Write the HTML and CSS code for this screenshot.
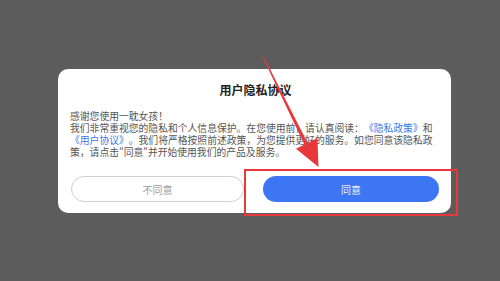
FILE: index.html
```html
<!DOCTYPE html>
<html lang="zh-CN">
<head>
<meta charset="utf-8">
<link rel="stylesheet" href="styles.css">
</head>
<body>
<div class="screen">
  <div class="dialog">
    <div class="title">用户隐私协议</div>
    <div class="content">
      <p>感谢您使用一耽女孩！</p>
      <p>我们非常重视您的隐私和个人信息保护。在您使用前，请认真阅读：<span class="link">《隐私政策》</span>和<br><span class="link">《用户协议》</span>。我们将严格按照前述政策，为您提供更好的服务。如您同意该隐私政<br>策，请点击"同意"并开始使用我们的产品及服务。</p>
    </div>
    <div class="actions">
      <button class="btn btn-decline">不同意</button>
      <button class="btn btn-agree">同意</button>
    </div>
  </div>
  <div class="highlight"></div>
  <svg class="arrow" width="500" height="281" viewBox="0 0 500 281">
    <polygon points="262.6,57 263.6,56.6 307.9,143.6 304.7,145.2" fill="#e8383b"/>
    <polygon points="317.4,138.0 296.0,148.8 318.5,167" fill="#e8383b"/>
  </svg>
</div>
</body>
</html>
```
FILE: styles.css
```css
* { box-sizing: border-box; }
html, body {
  margin: 0;
  padding: 0;
  background: #5c5c5c;
}
.screen {
  position: relative;
  width: 500px;
  height: 281px;
  padding-top: 69px;
  padding-left: 58px;
  font-family: "Noto Sans CJK SC", "Noto Sans", sans-serif;
}
.dialog {
  width: 393px;
  height: 144px;
  background: #ffffff;
  border-radius: 10px;
  padding: 13px 12px 11px 13px;
  display: flex;
  flex-direction: column;
}
.title {
  text-align: center;
  font-size: 12px;
  line-height: 16px;
  font-weight: 700;
  color: #222;
  padding-left: 1px;
}
.content {
  margin-top: 12px;
  font-size: 9.8px;
  line-height: 12px;
  color: #555;
  width: 380px;
  margin-left: -1px;
  white-space: nowrap;
  text-spacing-trim: space-all;
}
.content p { margin: 0; }
.link { color: #3d7ae6; }
.actions {
  margin-top: auto;
  display: flex;
  gap: 19px;
}
.btn {
  height: 26px;
  border-radius: 13px;
  font-family: inherit;
  font-size: 10px;
  padding: 0;
  cursor: pointer;
}
.btn-decline {
  width: 173px;
  background: #fff;
  border: 1px solid #cfcfcf;
  color: #9a9a9a;
}
.btn-agree {
  width: 176px;
  background: #3d76f2;
  border: none;
  color: #eef2ff;
}
.highlight {
  position: absolute;
  left: 244px;
  top: 169px;
  width: 214px;
  height: 47px;
  border: 2.5px solid #e8383b;
}
.arrow {
  position: absolute;
  left: 0;
  top: 0;
}
```
